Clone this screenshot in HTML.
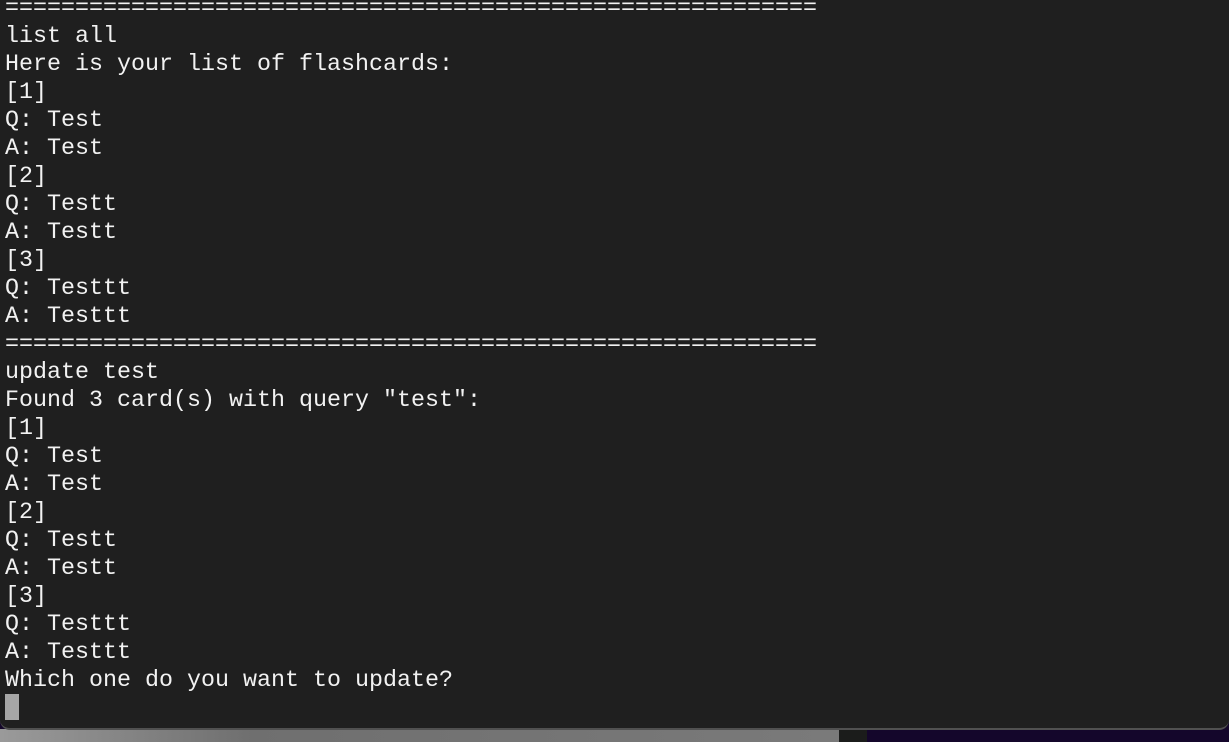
<!DOCTYPE html>
<html><head><meta charset="utf-8"><style>
html,body{margin:0;padding:0;width:1229px;height:742px;overflow:hidden;background:#14072a;}
#bottom{position:absolute;left:0;top:729px;width:1229px;height:13px;}
#gray{position:absolute;left:0;top:0;width:839px;height:13px;background:linear-gradient(90deg,#9a9a9a,#6f6f6f 30%,#7a7a7a);}
#dark{position:absolute;left:839px;top:0;width:28px;height:13px;background:#1b1c1b;}
#purple{position:absolute;left:867px;top:0;width:362px;height:13px;background:#14062b;}
#win{position:absolute;left:0;top:-12px;width:1229px;height:742px;background:#1f1f1f;border-bottom:2px solid #505050;border-radius:0 0 10px 10px;box-sizing:border-box;}
pre{position:absolute;left:5px;top:-5px;margin:0;font-family:"Liberation Mono",monospace;font-size:23.33px;line-height:28px;color:#f2f2f2;}
#cur{position:absolute;left:5px;top:694px;width:14px;height:26px;background:#a6a6a6;}
</style></head><body>
<div id="bottom"><div id="gray"></div><div id="dark"></div><div id="purple"></div></div>
<div id="win"></div>
<pre>==========================================================
list all
Here is your list of flashcards:
[1]
Q: Test
A: Test
[2]
Q: Testt
A: Testt
[3]
Q: Testtt
A: Testtt
==========================================================
update test
Found 3 card(s) with query "test":
[1]
Q: Test
A: Test
[2]
Q: Testt
A: Testt
[3]
Q: Testtt
A: Testtt
Which one do you want to update?</pre>
<div id="cur"></div>
</body></html>
